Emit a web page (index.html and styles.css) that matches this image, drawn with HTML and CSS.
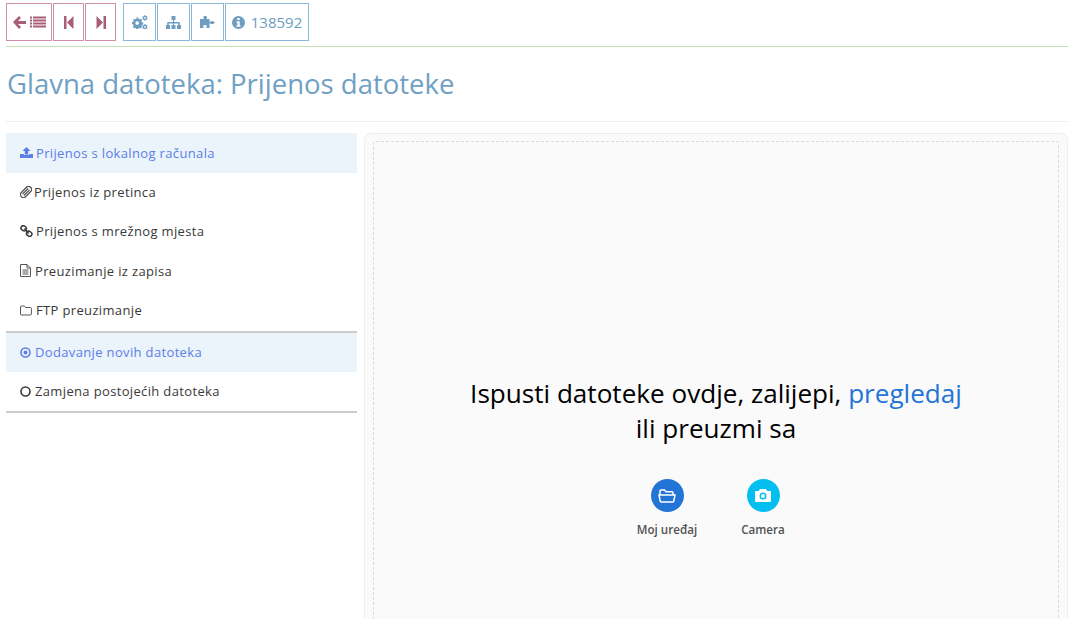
FILE: index.html
```html
<!DOCTYPE html>
<html lang="hr">
<head>
<meta charset="utf-8">
<title>Prijenos datoteke</title>
<link rel="stylesheet" href="styles.css">
</head>
<body>
<nav class="toolbar">
  <div class="group">
    <a class="btn rose wide"><svg class="ic" width="33" height="14" viewBox="0 0 33 14"><path d="M0 7 6 1l2 2-3 3h8v3H5l3 3-2 2z"/><path d="M17 1.500h2v2h-2zM20 1.500h13v2H20zM17 4.500h2v2h-2zM20 4.500h13v2H20zM17 7.500h2v2h-2zM20 7.500h13v2H20zM17 10.500h2v2h-2zM20 10.500h13v2H20z"/></svg></a>
    <a class="btn rose"><svg class="ic" width="10" height="13" viewBox="0 0 10 13"><path d="M0 0h2.500v13H0zM9.500 0v13L3 6.500z"/></svg></a>
    <a class="btn rose"><svg class="ic" width="10" height="13" viewBox="0 0 10 13"><path d="M10 0H7.500v13H10zM.5 0v13L7 6.500z"/></svg></a>
  </div>
  <div class="group">
    <a class="btn blue"><svg class="ic" width="16" height="14" viewBox="0 0 16 14"><path fill-rule="evenodd" d="M4.200 2.500h2l.3 1.300 1 .5 1.200-.6 1.400 1.400-.7 1.100.5 1 1.300.4v2l-1.300.3-.5 1 .7 1.200-1.400 1.400-1.200-.7-1 .4-.3 1.300h-2l-.3-1.300-1-.4-1.200.7L1 11.600l.7-1.200-.5-1-1.200-.3v-2l1.200-.4.5-1L1 5.100l1.500-1.400 1.100.6 1-.5zM5.200 6.300a1.800 1.800 0 1 0 0 3.600 1.800 1.800 0 0 0 0-3.600z"/><path fill-rule="evenodd" d="M12.500 0l1 .2.100.8.7.4.7-.3.6.9-.5.600v.8l.5.6-.6.9-.7-.3-.7.4-.1.800h-1l-.3-.8-.6-.4-.8.3-.5-.9.600-.6v-.8l-.6-.6.5-.9.8.3.6-.4zM13 2a.9.9 0 1 0 0 1.800A.9.9 0 0 0 13 2z"/><path fill-rule="evenodd" d="M12.500 9l1 .1.100.8.7.4.7-.3.6.9-.5.600v.8l.5.6-.6.9-.7-.3-.7.4-.1.800h-1l-.3-.8-.6-.4-.8.3-.5-.9.600-.6v-.8l-.6-.6.5-.9.8.3.6-.4zM13 11a.9.900 0 1 0 0 1.800.9.900 0 0 0 0-1.800z"/></svg></a>
    <a class="btn blue"><svg class="ic" width="15" height="13" viewBox="0 0 15 13"><path d="M5.500 0h4v4H8v2h5c.4 0 .8.400.8.800V9h1.200v4h-4V9h1.300V7.500H8V9h1.500v4h-4V9H7V7.500H2.700V9H4v4H0V9h1.200V6.800c0-.4.400-.8.800-.8h5V4H5.500z"/></svg></a>
    <a class="btn blue"><svg class="ic" width="15" height="12" viewBox="0 0 15 12"><path d="M0 3h4C3.500 2.300 3.300 1.900 3.300 1.400 3.300.6 4.100 0 5.200 0s1.900.6 1.900 1.400c0 .5-.3.900-.7 1.600h3.100v3c.8-.5 1.200-.8 1.800-.8.100 0 .2 0 .3 0h1.300c.9 0 1.600.6 1.600 1.400S13.800 8 12.900 8h-1.300c-.7 0-1.200-.3-2.100-.9V12H6.200c.4-.7.700-1.100.7-1.600 0-.8-.8-1.400-1.900-1.400s-1.900.6-1.900 1.400c0 .5.300.9.700 1.600H0z"/></svg></a>
    <a class="btn blue info"><svg class="ic" width="13" height="13" viewBox="0 0 13 13"><path fill-rule="evenodd" d="M6.500 0a6.500 6.500 0 1 1 0 13 6.500 6.500 0 0 1 0-13zM5.300 2v2h2.400V2zM4.500 5.300v1.500h.9v2.500h-.9v1.500h4V9.300h-.8V5.300z"/></svg><span>138592</span></a>
  </div>
</nav>

<h1 class="title">Glavna datoteka: Prijenos datoteke</h1>

<main class="content">
  <aside class="side">
    <ul class="menu">
      <li class="item active"><svg class="mi up" width="13" height="11" viewBox="0 0 13 11"><path d="M6.500 0l4 4H8.200v3.500H4.800V4H2.500zM0 7h3.800v1h5.400V7H13v4H0z"/></svg>Prijenos s lokalnog računala</li>
      <li class="item"><svg class="mi clip" width="12" height="12" viewBox="0 0 12 12"><g fill="none" stroke-width="1.300" transform="rotate(45 6 6)"><rect x="3" y="-.5" width="6" height="13" rx="2.500"/><path d="M5 2v8M7 2v8"/></g></svg>Prijenos iz pretinca</li>
      <li class="item"><svg class="mi link" width="13" height="12" viewBox="0 0 13 12"><g fill="none" stroke-width="1.500"><rect x="1" y="1" width="5.500" height="4.500" rx="2.200" transform="rotate(35 3.700 3.200)"/><rect x="6.500" y="6.500" width="5.500" height="4.500" rx="2.200" transform="rotate(35 9.200 8.700)"/><path d="M4.500 3.500l4 5"/></g></svg>Prijenos s mrežnog mjesta</li>
      <li class="item"><svg class="mi doc" width="11" height="13" viewBox="0 0 11 13"><path fill="none" stroke-width="1" d="M.5.500h6.500l3.500 3.500v8.500H.5zM7 .500V4h3.500M2.500 6h6M2.500 8h6M2.500 10h6"/></svg>Preuzimanje iz zapisa</li>
      <li class="item"><svg class="mi folder" width="12" height="11" viewBox="0 0 12 11"><path fill="none" stroke-width="1" d="M1.300 1h3l1.200 1.500h5c.5 0 .9.400.9.900v5.700c0 .5-.4.900-.9.900H1.300c-.5 0-.8-.4-.8-.9V1.800c0-.4.300-.8.800-.8z"/></svg>FTP preuzimanje</li>
    </ul>
    <ul class="menu menu-short">
      <li class="item active"><svg class="mi radio" width="11" height="11" viewBox="0 0 11 11"><circle cx="5.500" cy="5.500" r="4.500" fill="none" stroke-width="1.600"/><circle class="dot" cx="5.500" cy="5.500" r="2"/></svg>Dodavanje novih datoteka</li>
      <li class="item"><svg class="mi radio" width="11" height="11" viewBox="0 0 11 11"><circle cx="5.500" cy="5.500" r="4.500" fill="none" stroke-width="1.600"/></svg>Zamjena postojećih datoteka</li>
    </ul>
  </aside>

  <section class="panel">
    <div class="drop">
      <p class="drop-text">Ispusti datoteke ovdje, zalijepi, <span class="browse">pregledaj</span><br>ili preuzmi sa</p>
      <div class="sources">
        <div class="source">
          <span class="round device"><svg width="18" height="14" viewBox="0 0 18 14"><path fill="none" stroke="#fff" stroke-width="1.500" d="M2 6V2c0-.6.400-1 1-1h3.500L8 2.800h6c.6 0 1 .4 1 1V6M1 6h16l-1.200 6.200c-.1.500-.5.800-1 .8H3.200c-.5 0-.9-.3-1-.8z"/></svg></span>
          <span class="src-label">Moj uređaj</span>
        </div>
        <div class="source">
          <span class="round camera"><svg width="16" height="13" viewBox="0 0 16 13"><path fill="#fff" fill-rule="evenodd" d="M5 0h6l1.200 2H15c.6 0 1 .4 1 1v9c0 .6-.4 1-1 1H1c-.6 0-1-.4-1-1V3c0-.6.400-1 1-1h2.800zM8 3.500a3.500 3.500 0 1 0 0 7 3.500 3.500 0 0 0 0-7zM8 5a2 2 0 1 1 0 4 2 2 0 0 1 0-4z"/></svg></span>
          <span class="src-label">Camera</span>
        </div>
      </div>
    </div>
  </section>
</main>
</body>
</html>
```
FILE: styles.css
```css
* { box-sizing: border-box; }
html, body { height: 100%; overflow: hidden; }
body {
  margin: 0;
  padding: 3px 6px 0;
  background: #fff;
  font-family: "Open Sans", sans-serif;
  font-size: 13px;
  color: #393939;
}
.toolbar {
  display: flex;
  gap: 7px;
  height: 44px;
  border-bottom: 1px solid #c5e0b4;
}
.group { display: flex; gap: 1px; height: 38px; }
.btn {
  display: flex;
  align-items: center;
  justify-content: center;
  gap: 6px;
  width: 33px;
  height: 38px;
  border: 1px solid;
  background: #fff;
  font-size: 15px;
}
.group:first-child .btn { width: 31px; }
.group:first-child .btn.wide { width: 46px; }
.rose { border-color: #cf8fa6; color: #a85d78; }
.blue { border-color: #8ab8d6; color: #6d9dc0; }
.blue.info { width: 84px; }
.ic { fill: currentColor; flex: none; }
.title {
  margin: 0;
  height: 75px;
  padding: 19px 0 0 1px;
  border-bottom: 1px solid #eee;
  font-size: 27.5px;
  font-weight: 400;
  line-height: 36px;
  color: #70a0c4;
}
.content {
  display: flex;
  gap: 7px;
  margin-top: 11px;
  height: 600px;
}
.side { width: 351px; flex: none; }
.menu {
  margin: 0;
  padding: 0;
  list-style: none;
  border-bottom: 2px solid #ccc;
}
.item {
  display: flex;
  align-items: center;
  height: 39.5px;
  padding: 0 0 1px 14px;
  letter-spacing: .35px;
  color: #393939;
}
.menu .item:first-child { padding-bottom: 0; }
.menu-short .item { height: 39px; padding-bottom: 0; }
.item.active { background: #ebf3fb; color: #5c7ee8; }
.mi { flex: none; margin-right: 2px; fill: currentColor; stroke: currentColor; }
.up, .dot { stroke: none; }
.up { margin-right: 3px; }
.clip { margin-right: 2px; color: #555; }
.link { margin-right: 3px; }
.doc { margin-right: 4px; color: #555; }
.folder { margin-right: 4px; color: #555; }
.radio { margin-right: 4px; }
.panel {
  flex: 1;
  min-width: 0;
  height: 600px;
  padding: 7px 8px;
  border: 1px solid #eee;
  border-radius: 7px;
  background: #fafafa;
}
.drop {
  height: 590px;
  padding-top: 234px;
  border: 1px dashed #dadada;
  border-radius: 3px;
  text-align: center;
}
.drop-text {
  margin: 0;
  font-size: 26.1px;
  line-height: 35px;
  color: #000;
}
.browse { color: #2275d7; }
.sources {
  display: flex;
  justify-content: center;
  gap: 36px;
  margin-top: 33px;
  padding-right: 2px;
}
.source {
  display: flex;
  flex-direction: column;
  align-items: center;
  gap: 10px;
  width: 60px;
}
.round {
  display: flex;
  align-items: center;
  justify-content: center;
  width: 33px;
  height: 33px;
  border-radius: 50%;
}
.device { background: #2275d7; }
.camera { background: #03bfef; }
.src-label {
  font-size: 11.6px;
  font-weight: 600;
  white-space: nowrap;
  color: #525252;
}
```
